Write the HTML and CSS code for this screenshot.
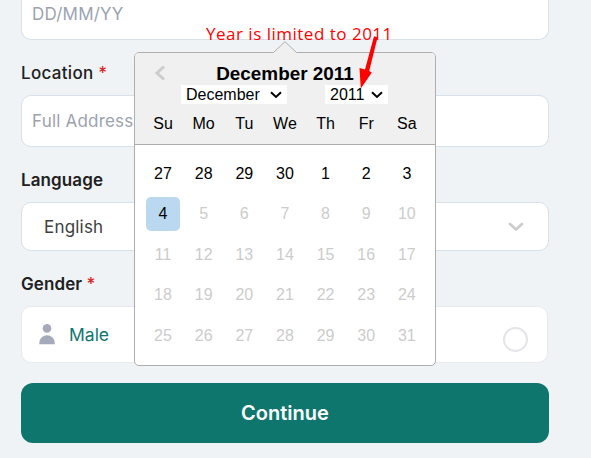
FILE: index.html
```html
<!DOCTYPE html>
<html lang="en">
<head>
<meta charset="utf-8">
<title>Details</title>
<link rel="stylesheet" href="styles.css">
</head>
<body>
<main class="form">
  <div class="field date">DD/MM/YY</div>
  <div class="label location">Location <span class="req">*</span></div>
  <div class="field address">Full Address</div>
  <div class="label">Language</div>
  <div class="field select">
    <span>English</span>
    <svg width="16" height="10" viewBox="0 0 16 10"><path d="M2 2l6 5.6L14 2" fill="none" stroke="#ccc" stroke-width="2.7" stroke-linecap="round" stroke-linejoin="round"/></svg>
  </div>
  <div class="label">Gender <span class="req">*</span></div>
  <div class="field gender">
    <svg width="16" height="21" viewBox="0 0 16 21" fill="#a6a9ba"><circle cx="8" cy="4.4" r="4.3"/><path d="M.3 20.3v-1.500a7.700 7.500 0 0 1 15.400 0v1.500z"/></svg>
    <span class="male">Male</span>
    <span class="radio"></span>
  </div>
  <button class="continue">Continue</button>
</main>

<section class="calendar">
  <svg class="tip" width="24" height="13" viewBox="0 0 24 13"><path d="M0 13V12L12 .7 24 12v1z" fill="#f0f0f0"/><path d="M.5 11.5L12 .7l11.500 10.800" fill="none" stroke="#aeaeae"/></svg>
  <svg class="prev" width="12" height="16" viewBox="0 0 12 16"><path d="M10 1.500L3 8l7 6.500" fill="none" stroke="#ccc" stroke-width="3"/></svg>
  <header class="head">
    <div class="title">December 2011</div>
    <div class="picks">
      <span class="pick month">December <svg width="12" height="8" viewBox="0 0 12 8"><path d="M1 1.300l5 4.700 5-4.700" fill="none" stroke="#000" stroke-width="2"/></svg></span>
      <span class="pick year">2011 <svg width="12" height="8" viewBox="0 0 12 8"><path d="M1 1.300l5 4.700 5-4.700" fill="none" stroke="#000" stroke-width="2"/></svg></span>
    </div>
    <div class="week names"><span>Su</span><span>Mo</span><span>Tu</span><span>We</span><span>Th</span><span>Fr</span><span>Sa</span></div>
  </header>
  <div class="days">
    <div class="week"><span>27</span><span>28</span><span>29</span><span>30</span><span>1</span><span>2</span><span>3</span></div>
    <div class="week off"><span class="today">4</span><span>5</span><span>6</span><span>7</span><span>8</span><span>9</span><span>10</span></div>
    <div class="week off"><span>11</span><span>12</span><span>13</span><span>14</span><span>15</span><span>16</span><span>17</span></div>
    <div class="week off"><span>18</span><span>19</span><span>20</span><span>21</span><span>22</span><span>23</span><span>24</span></div>
    <div class="week off"><span>25</span><span>26</span><span>27</span><span>28</span><span>29</span><span>30</span><span>31</span></div>
  </div>
</section>

<div class="note">Year is limited to 2011</div>
<svg class="arrow" width="24" height="56" viewBox="0 0 24 56" fill="#f00"><path d="M16 1.200L19.600 2.200 11.200 36 13.800 37.500 2.800 53.500 1.500 33 7 34.500z"/></svg>
</body>
</html>
```
FILE: styles.css
```css
* { box-sizing: border-box; }
body { margin: 0; width: 591px; height: 458px; overflow: hidden; position: relative; background: #eff3f6; font-family: Inter, sans-serif; }
svg { display: block; flex: none; }
.form { width: 528px; margin-left: 21px; }
.field { display: flex; align-items: center; background: #fff; border: 1px solid #d8e0ea; border-radius: 10px; padding-left: 10px; font-size: 17px; letter-spacing: .2px; color: #9ca3af; white-space: nowrap; }
.date { height: 40px; border-top: 0; border-radius: 0 0 10px 10px; padding-bottom: 12px; }
.address { height: 52px; }
.label { height: 55px; padding-top: 22px; line-height: 22px; font-size: 17px; font-weight: 600; letter-spacing: .1px; color: #202020; }
.location { font-weight: 500; letter-spacing: .3px; }
.req { color: #dc2626; font-weight: 500; }
.select { height: 49px; padding: 0 24px 0 22px; justify-content: space-between; color: #404040; }
.gender { width: 527px; height: 57px; border-color: #e5eaf0; padding: 0 19px 1px 17px; }
.male { margin-left: 14px; font-size: 17.5px; letter-spacing: 0; color: #0f766e; }
.radio { width: 25px; height: 25px; margin: 11px 0 0 auto; border: 2px solid #e4e4e9; border-radius: 50%; }
.continue { display: block; width: 528px; height: 60px; margin-top: 20px; border: 0; border-radius: 12px; background: #0f766e; color: #fff; font: 600 20px Inter, sans-serif; }
.calendar { position: absolute; left: 134px; top: 52px; width: 302px; height: 314px; border: 1px solid #aeaeae; border-radius: 5px; background: #fff; font-family: "Liberation Sans", sans-serif; font-size: 16px; color: #000; }
.tip { position: absolute; left: 138px; top: -12px; }
.prev { position: absolute; left: 19px; top: 12px; }
.head { height: 92px; background: #f0f0f0; border-bottom: 1px solid #aeaeae; border-radius: 4px 4px 0 0; padding-top: 9px; }
.title { text-align: center; font-size: 18.9px; font-weight: 700; line-height: 23px; }
.picks { display: flex; gap: 38px; padding-left: 46px; }
.pick { display: flex; align-items: center; justify-content: space-between; height: 19px; padding: 0 5px; background: #fff; }
.month { width: 106px; }
.year { width: 63px; }
.week { display: grid; grid-template-columns: repeat(7, 34px); column-gap: 6.65px; padding-left: 11px; text-align: center; line-height: 34px; }
.names { margin-top: 3px; }
.days { display: grid; row-gap: 6.600px; padding-top: 11.500px; }
.off { color: #ccc; }
.today { background: #bad9f1; color: #000; border-radius: 5px; }
.note { position: absolute; left: 206px; top: 22px; font: 17px/24px "Open Sans", sans-serif; letter-spacing: .5px; color: #f00; white-space: nowrap; }
.arrow { position: absolute; left: 358px; top: 35px; }
```
